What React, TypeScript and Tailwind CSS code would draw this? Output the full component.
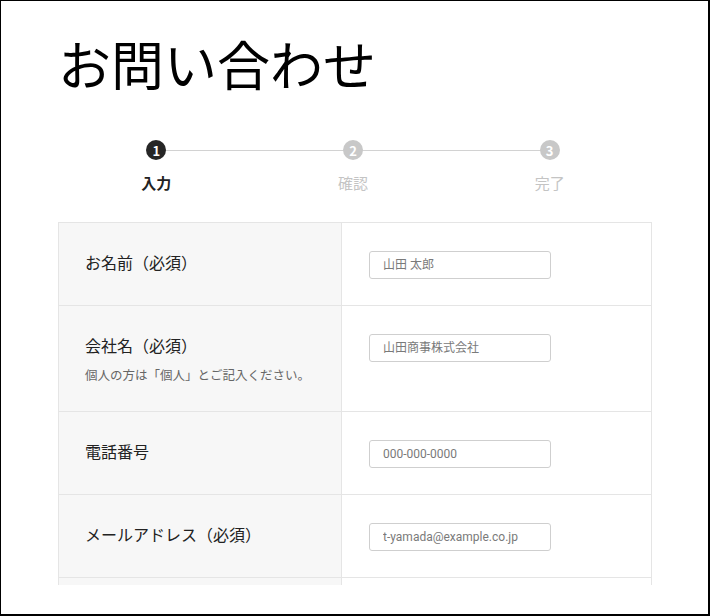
const steps = [
  { no: 1, label: "入力", active: true },
  { no: 2, label: "確認", active: false },
  { no: 3, label: "完了", active: false },
];

type Row = {
  label: string;
  note?: string;
  placeholder: string;
};

const rows: Row[] = [
  { label: "お名前（必須）", placeholder: "山田 太郎" },
  { label: "会社名（必須）", note: "個人の方は「個人」とご記入ください。", placeholder: "山田商事株式会社" },
  { label: "電話番号", placeholder: "000-000-0000" },
  { label: "メールアドレス（必須）", placeholder: "t-yamada@example.co.jp" },
];

function Steps() {
  return (
    <div className="relative mt-[50px] grid grid-cols-3 pr-[4px]">
      <div className="absolute left-[16.5%] right-[17%] top-[10px] h-px bg-[#d2d2d2]" />
      {steps.map((step) => (
        <div key={step.no} className="relative flex flex-col items-center">
          <div
            className={
              step.active
                ? "flex h-[20px] w-[20px] items-center justify-center rounded-full bg-[#262626] text-[13px] font-bold leading-none text-white"
                : "flex h-[20px] w-[20px] items-center justify-center rounded-full bg-[#c8c8c8] text-[13px] font-bold leading-none text-white"
            }
          >
            {step.no}
          </div>
          <p
            className={
              step.active
                ? "mt-3 text-[15px] font-bold leading-[22px] text-[#222]"
                : "mt-3 text-[15px] leading-[22px] text-[#c4c4c4]"
            }
          >
            {step.label}
          </p>
        </div>
      ))}
    </div>
  );
}

export default function App() {
  return (
    <div
      className="h-[616px] w-[710px] overflow-hidden border-b-2 border-l border-r-2 border-t border-black bg-white"
      style={{ fontFamily: '"Noto Sans CJK JP", "Noto Sans", sans-serif' }}
    >
      <div className="h-[584px] overflow-hidden pl-[57px] pr-[56px]">
        <h1 className="pt-[36px] text-[53px] font-normal leading-[53px] text-black">お問い合わせ</h1>

        <Steps />

        <div className="mt-[28px] border border-[#e5e5e5]">
          {rows.map((row) => (
            <div key={row.label} className="grid grid-cols-[283px_1fr] border-b border-[#e5e5e5]">
              <div className="border-r border-[#e5e5e5] bg-[#f7f7f7] px-[26px] pb-[26px] pt-[27px]">
                <p className="text-[16px] leading-[24px] text-[#222]">{row.label}</p>
                {row.note && <p className="mt-[8px] text-[12.5px] leading-[20px] text-[#666]">{row.note}</p>}
              </div>
              <div className="px-[27px] pb-[26px] pt-[27px]">
                <input
                  type="text"
                  placeholder={row.placeholder}
                  className="h-[28px] w-[182px] rounded-[3px] border border-[#cfcfcf] bg-white px-[13px] text-[12px] text-[#333] outline-none placeholder:text-[#7a7a7a]"
                  style={{ fontFamily: 'Roboto, "Noto Sans CJK JP", sans-serif' }}
                />
              </div>
            </div>
          ))}
          <div className="grid h-[60px] grid-cols-[283px_1fr]">
            <div className="border-r border-[#e5e5e5] bg-[#f7f7f7]" />
            <div />
          </div>
        </div>
      </div>
    </div>
  );
}
